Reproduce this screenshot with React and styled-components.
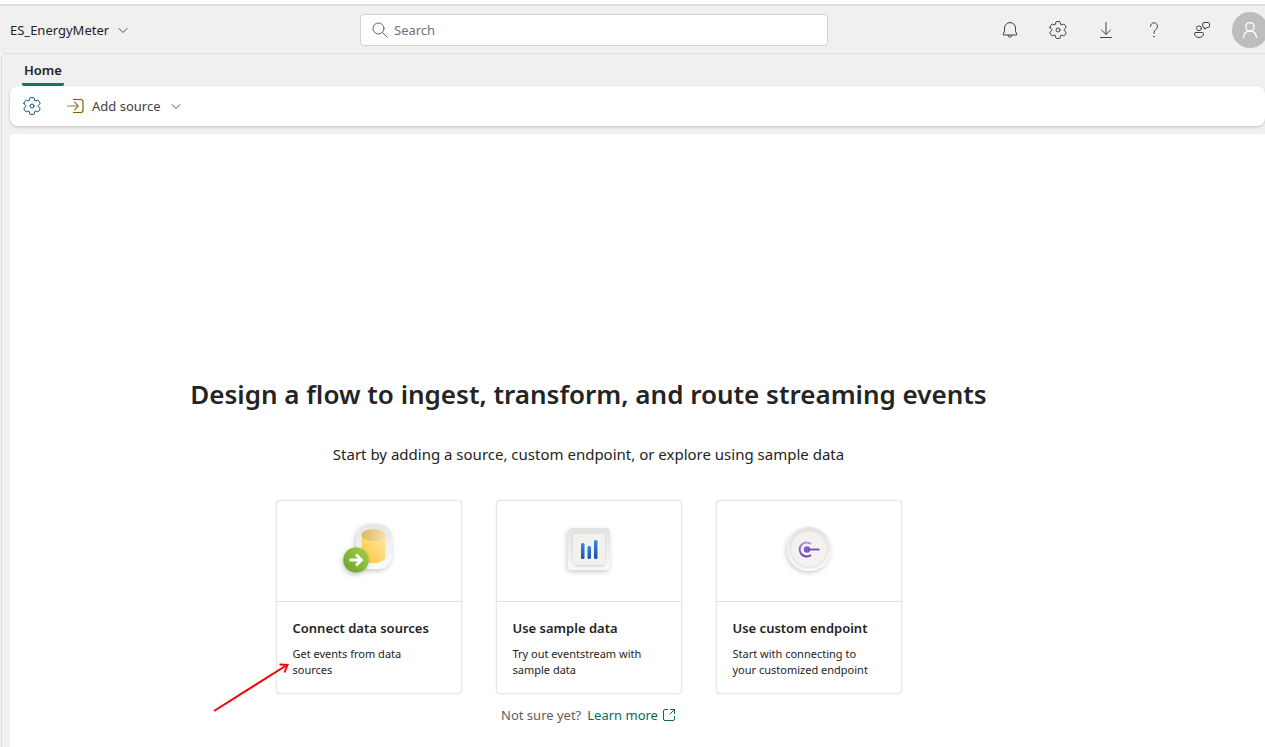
import React from 'react';
import styled, { createGlobalStyle } from 'styled-components';

const GlobalStyle = createGlobalStyle`
  * { box-sizing: border-box; }
  body {
    margin: 0;
    background: #fff;
    color: #242424;
    font-family: "Noto Sans", "Open Sans", sans-serif;
    font-size: 13px;
    line-height: 20px;
  }
  button, input { font: inherit; color: inherit; }
  h1, h2, p { margin: 0; }
`;

const Page = styled.div`
  display: flex;
  flex-direction: column;
  min-height: 100vh;
  padding-top: 4px;
`;

const Header = styled.header`
  display: grid;
  grid-template-columns: 360px minmax(160px, 468px) 1fr;
  align-items: center;
  height: 49px;
  border-top: 2px solid #e0e0e0;
  background: #f0f0f0;
  overflow: hidden;
`;

const PlainButton = styled.button`
  display: flex;
  align-items: center;
  padding: 0;
  border: 0;
  background: none;
  cursor: pointer;
`;

const ItemSwitcher = styled(PlainButton)`
  justify-self: start;
  gap: 8px;
  padding-left: 10px;
`;

const SearchBox = styled.label`
  display: flex;
  align-items: center;
  gap: 4px;
  height: 32px;
  padding: 0 9px;
  border: 1px solid #d1d1d1;
  border-radius: 4px;
  background: #fff;
  color: #616161;
`;

const SearchInput = styled.input`
  flex: 1;
  min-width: 0;
  padding: 0;
  border: 0;
  outline: 0;
  background: none;
  &::placeholder { color: #707070; opacity: 1; }
`;

const HeaderActions = styled.div`
  display: flex;
  justify-content: flex-end;
  align-items: center;
  margin-right: -3px;
`;

const HeaderButton = styled(PlainButton)`
  justify-content: center;
  width: 48px;
  height: 40px;
  color: #424242;
`;

const Avatar = styled(PlainButton)`
  justify-content: center;
  width: 36px;
  height: 36px;
  margin-left: 6px;
  border-radius: 50%;
  background: #bdbdbd;
  color: #fff;
`;

const Workspace = styled.div`
  flex: 1;
  display: flex;
  flex-direction: column;
  margin-left: 2px;
  padding-left: 8px;
  border-top: 1px solid #e0e0e0;
  background: #f0f0f0;
  box-shadow: -1px 2px 2px rgba(0, 0, 0, 0.2);
`;

const Tabs = styled.nav`
  display: flex;
  height: 32px;
  padding-left: 12px;
`;

const Tab = styled(PlainButton)`
  padding: 2px 2px 0;
  border-bottom: 3px solid #117865;
  border-radius: 0 0 2px 2px;
  font-weight: 600;
`;

const Toolbar = styled.div`
  display: flex;
  align-items: center;
  gap: 24px;
  height: 40px;
  padding: 0 12px;
  border-radius: 8px;
  background: #fff;
  box-shadow: 0 1px 3px rgba(0, 0, 0, 0.2);
`;

const ToolButton = styled(PlainButton)`
  gap: 6px;
  color: ${(p) => p.$color || '#424242'};
`;

const ToolLabel = styled.span`
  padding-right: 4px;
`;

const Canvas = styled.main`
  flex: 1;
  display: flex;
  flex-direction: column;
  align-items: center;
  margin-top: 8px;
  padding: 242px 98px 20px 0;
  border-radius: 4px 0 0 0;
  background: #fff;
`;

const Title = styled.h1`
  font-size: 26px;
  line-height: 36px;
  font-weight: 600;
`;

const Subtitle = styled.p`
  margin-top: 32px;
  font-size: 15px;
`;

const Cards = styled.div`
  display: flex;
  gap: 34px;
  margin-top: 36px;
`;

const CardSlot = styled.div`
  position: relative;
`;

const Card = styled.button`
  display: flex;
  flex-direction: column;
  width: 186px;
  min-height: 194px;
  padding: 0;
  border: 1px solid #e6e6e6;
  border-radius: 4px;
  background: #fff;
  box-shadow: 0 0 2px rgba(0, 0, 0, 0.1);
  text-align: left;
  cursor: pointer;
`;

const CardArt = styled.span`
  display: flex;
  flex-shrink: 0;
  align-items: center;
  justify-content: center;
  align-self: stretch;
  height: 101px;
  padding-bottom: 2px;
  border-bottom: 1px solid #e0e0e0;
`;

const CardText = styled.span`
  display: flex;
  flex-direction: column;
  gap: 8px;
  padding: 16px 24px 14px 16px;
`;

const CardTitle = styled.span`
  font-weight: 600;
  white-space: nowrap;
`;

const CardNote = styled.span`
  font-size: 11px;
  line-height: 16px;
`;

const Pointer = styled.svg`
  position: absolute;
  left: -64px;
  bottom: -20px;
  pointer-events: none;
`;

const Footnote = styled.p`
  display: flex;
  gap: 6px;
  margin-top: 11px;
  color: #616161;
`;

const Link = styled.a`
  display: flex;
  align-items: center;
  gap: 4px;
  color: #0c695a;
  text-decoration: none;
`;

const Icon = ({ size = 20, box = 20, width = 1, children }) => (
  <svg
    width={size} height={size} viewBox={`0 0 ${box} ${box}`} fill="none" stroke="currentColor"
    strokeWidth={width} strokeLinecap="round" strokeLinejoin="round" aria-hidden="true"
  >
    {children}
  </svg>
);

const Chevron = () => (
  <Icon size={12} box={12}><path d="M2 4.500 6 8.500l4-4" stroke="#505050" /></Icon>
);

const Gear = () => (
  <Icon>
    <path d="M1.91 7.38A8.5 8.5 0 0 1 3.7 4.3a.5.5 0 0 1 .54-.13l1.92.68a1 1 0 0 0 1.32-.76l.36-2a.5.5 0 0 1 .4-.4 8.53 8.53 0 0 1 3.55 0c.2.04.35.2.38.4l.37 2a1 1 0 0 0 1.32.76l1.92-.68a.5.5 0 0 1 .54.13 8.5 8.5 0 0 1 1.78 3.08c.06.2 0 .4-.15.54l-1.56 1.32a1 1 0 0 0 0 1.52l1.56 1.32a.5.5 0 0 1 .15.54 8.5 8.5 0 0 1-1.78 3.08.5.5 0 0 1-.54.13l-1.92-.68a1 1 0 0 0-1.32.76l-.37 2a.5.5 0 0 1-.38.4 8.53 8.53 0 0 1-3.56 0 .5.5 0 0 1-.39-.4l-.36-2a1 1 0 0 0-1.32-.76l-1.92.68a.5.5 0 0 1-.54-.13 8.5 8.5 0 0 1-1.78-3.08.5.5 0 0 1 .15-.54l1.56-1.32a1 1 0 0 0 0-1.52L2.06 7.92a.5.5 0 0 1-.15-.54Z" />
    <circle cx="10" cy="10" r="2" />
  </Icon>
);

const Bell = () => (
  <Icon>
    <path d="M10 2.5A5.5 5.5 0 0 0 4.5 8v3.2l-1.3 3.1a.5.5 0 0 0 .5.7h12.6a.5.5 0 0 0 .5-.7l-1.3-3.1V8A5.5 5.5 0 0 0 10 2.5Z" />
    <path d="M8 15.200a2 2 0 0 0 4 0" />
  </Icon>
);

const Download = () => (
  <Icon><path d="M10 2.500V14M5.500 10l4.500 4.500 4.500-4.500M4.500 17.500h11" /></Icon>
);

const Question = () => (
  <Icon>
    <path d="M6.500 6.500c0-2.200 1.500-3.700 3.500-3.700s3.500 1.400 3.500 3.500c0 3-3.500 3.500-3.500 6.500v.7" />
    <circle cx="10" cy="16.600" r=".4" fill="currentColor" strokeWidth=".7" />
  </Icon>
);

const Feedback = () => (
  <Icon>
    <circle cx="7" cy="8.300" r="2.400" />
    <path d="M3.600 12.500h6.800a1.100 1.100 0 0 1 1.100 1.100c0 2.400-1.900 3.900-4.500 3.900s-4.500-1.500-4.500-3.900a1.100 1.100 0 0 1 1.100-1.100Z" />
    <path d="M12 2.500h4.200a1.300 1.300 0 0 1 1.300 1.300v2.400a1.300 1.300 0 0 1-1.300 1.300h-1.400l-2.100 1.800V7.500H12a1.300 1.300 0 0 1-1.300-1.300V3.800A1.300 1.300 0 0 1 12 2.500Z" />
  </Icon>
);

const Person = () => (
  <Icon width={1.3}>
    <circle cx="10" cy="6.800" r="4.200" />
    <path d="M3.500 17.500c.4-4 3-6.500 6.500-6.500s6.100 2.500 6.500 6.500" />
  </Icon>
);

const SearchIcon = () => (
  <Icon><circle cx="8.500" cy="8.500" r="5.500" /><path d="m12.500 12.500 4.700 4.700" /></Icon>
);

const AddSourceIcon = () => (
  <Icon width={1.2}>
    <path d="M7.500 3.500h7a2.500 2.500 0 0 1 2.500 2.500v8a2.500 2.500 0 0 1-2.500 2.500h-7" stroke="#835b00" />
    <path d="M1.500 10H12M8.500 6.200l3.800 3.800-3.800 3.800" stroke="#a07a28" />
  </Icon>
);

const OpenIcon = () => (
  <Icon size={14} box={14}>
    <path d="M5.500 1.500H3A1.500 1.500 0 0 0 1.500 3v8A1.500 1.500 0 0 0 3 12.500h8a1.500 1.500 0 0 0 1.500-1.500V8.500M8.500 1.500h4v4M12.300 1.700 8 6" />
  </Icon>
);

const SourceArt = () => (
  <svg width="64" height="64" viewBox="0 0 64 64" aria-hidden="true">
    <defs>
      <linearGradient id="srcPlate" x1="0" y1="0" x2="0" y2="1">
        <stop offset="0" stopColor="#e6e6e6" /><stop offset="1" stopColor="#fcfcfc" />
      </linearGradient>
      <linearGradient id="srcBody" x1="1" y1="0" x2="0" y2="1">
        <stop offset="0" stopColor="#ffe7a6" /><stop offset="1" stopColor="#ffc736" />
      </linearGradient>
      <linearGradient id="srcTop" x1="0" y1="0" x2="1" y2="0">
        <stop offset="0" stopColor="#e0b860" /><stop offset="1" stopColor="#f1dfae" />
      </linearGradient>
      <linearGradient id="srcGo" x1="1" y1="0" x2="0" y2="1">
        <stop offset="0" stopColor="#a5d24b" /><stop offset="1" stopColor="#6b9f2e" />
      </linearGradient>
      <filter id="srcShade" x="-40%" y="-40%" width="180%" height="190%">
        <feDropShadow dx="-1" dy="2" stdDeviation="2.4" floodOpacity=".22" />
      </filter>
    </defs>
    <rect x="19" y="6" width="36" height="45" rx="14" fill="url(#srcPlate)" filter="url(#srcShade)" />
    <path d="M24.500 17v22c0 3.400 5.300 6 12 6s12-2.600 12-6V17Z" fill="url(#srcBody)" />
    <ellipse cx="36.500" cy="17" rx="12" ry="6" fill="url(#srcTop)" />
    <circle cx="19" cy="42" r="12.800" fill="url(#srcGo)" filter="url(#srcShade)" />
    <path d="M12.500 42H24M19 36.500l5.500 5.500-5.500 5.500" fill="none" stroke="#fff" strokeWidth="2.800" />
  </svg>
);

const SampleArt = () => (
  <svg width="64" height="64" viewBox="0 0 64 64" aria-hidden="true">
    <defs>
      <linearGradient id="smpPlate" x1="0" y1="0" x2="0" y2="1">
        <stop offset="0" stopColor="#e2e2e2" /><stop offset="1" stopColor="#fafafa" />
      </linearGradient>
      <linearGradient id="smpBar" x1="0" y1="0" x2="0" y2="1">
        <stop offset="0" stopColor="#3f83ee" /><stop offset="1" stopColor="#1d4fa3" />
      </linearGradient>
      <filter id="smpShade" x="-40%" y="-40%" width="180%" height="180%">
        <feDropShadow dx="-1" dy="2" stdDeviation="2.4" floodOpacity=".2" />
      </filter>
      <filter id="smpTile" x="-40%" y="-40%" width="180%" height="180%">
        <feDropShadow dx="0" dy="1" stdDeviation=".8" floodOpacity=".18" />
      </filter>
    </defs>
    <rect x="11" y="10" width="42" height="42" rx="4" fill="url(#smpPlate)" filter="url(#smpShade)" />
    <rect x="16" y="16" width="32" height="31" rx="4" fill="#f2f1ee" filter="url(#smpTile)" />
    <rect x="24" y="25" width="3.500" height="16" rx="1.500" fill="url(#smpBar)" />
    <rect x="30.500" y="28" width="3.500" height="13" rx="1.500" fill="url(#smpBar)" />
    <rect x="37" y="22" width="3.500" height="19" rx="1.500" fill="url(#smpBar)" />
  </svg>
);

const EndpointArt = () => (
  <svg width="64" height="64" viewBox="0 0 64 64" aria-hidden="true">
    <defs>
      <linearGradient id="endPlate" x1="0" y1="0" x2="0" y2="1">
        <stop offset="0" stopColor="#e2e2e2" /><stop offset="1" stopColor="#fafafa" />
      </linearGradient>
      <linearGradient id="endRing" x1="0" y1="0" x2="0" y2="1">
        <stop offset="0" stopColor="#b493e6" /><stop offset="1" stopColor="#6b41b3" />
      </linearGradient>
      <filter id="endShade" x="-40%" y="-40%" width="180%" height="180%">
        <feDropShadow dx="-1" dy="2" stdDeviation="2.4" floodOpacity=".2" />
      </filter>
      <filter id="endTile" x="-40%" y="-40%" width="180%" height="180%">
        <feDropShadow dx="0" dy="1" stdDeviation=".8" floodOpacity=".16" />
      </filter>
    </defs>
    <circle cx="32" cy="31" r="22" fill="url(#endPlate)" filter="url(#endShade)" />
    <circle cx="32" cy="31" r="17.500" fill="#f3f2ef" filter="url(#endTile)" />
    <path d="M34 26a7 7 0 1 0 0 11" fill="none" stroke="url(#endRing)" strokeWidth="2" />
    <circle cx="30" cy="31.500" r="3.200" fill="#8257cf" />
    <path d="M31 31.500h11.500" stroke="#7748bd" strokeWidth="1.800" />
  </svg>
);

const RedArrow = () => (
  <Pointer width="80" height="54" viewBox="0 0 80 54" fill="none" stroke="#fb0007" strokeWidth="2" aria-hidden="true">
    <path d="M2 51 75 5M67.500 4.500 75.500 5 72.500 12.500" />
  </Pointer>
);

const cards = [
  { title: 'Connect data sources', note: 'Get events from data sources', Art: SourceArt, pointed: true },
  { title: 'Use sample data', note: 'Try out eventstream with sample data', Art: SampleArt },
  { title: 'Use custom endpoint', note: 'Start with connecting to your customized endpoint', Art: EndpointArt },
];

const actions = [
  ['Notifications', Bell],
  ['Settings', Gear],
  ['Downloads', Download],
  ['Help', Question],
  ['Feedback', Feedback],
];

export default function App() {
  return (
    <Page>
      <GlobalStyle />
      <Header>
        <ItemSwitcher>ES_EnergyMeter<Chevron /></ItemSwitcher>
        <SearchBox>
          <SearchIcon />
          <SearchInput type="text" placeholder="Search" aria-label="Search" />
        </SearchBox>
        <HeaderActions>
          {actions.map(([label, Glyph]) => (
            <HeaderButton key={label} aria-label={label}><Glyph /></HeaderButton>
          ))}
          <Avatar aria-label="Account"><Person /></Avatar>
        </HeaderActions>
      </Header>
      <Workspace>
        <Tabs><Tab>Home</Tab></Tabs>
        <Toolbar>
          <ToolButton $color="#0f548c" aria-label="Eventstream settings"><Gear /></ToolButton>
          <ToolButton><AddSourceIcon /><ToolLabel>Add source</ToolLabel><Chevron /></ToolButton>
        </Toolbar>
        <Canvas>
          <Title>Design a flow to ingest, transform, and route streaming events</Title>
          <Subtitle>Start by adding a source, custom endpoint, or explore using sample data</Subtitle>
          <Cards>
            {cards.map(({ title, note, Art, pointed }) => (
              <CardSlot key={title}>
                <Card>
                  <CardArt><Art /></CardArt>
                  <CardText>
                    <CardTitle>{title}</CardTitle>
                    <CardNote>{note}</CardNote>
                  </CardText>
                </Card>
                {pointed && <RedArrow />}
              </CardSlot>
            ))}
          </Cards>
          <Footnote>
            Not sure yet?
            <Link href="#learn-more">Learn more<OpenIcon /></Link>
          </Footnote>
        </Canvas>
      </Workspace>
    </Page>
  );
}
